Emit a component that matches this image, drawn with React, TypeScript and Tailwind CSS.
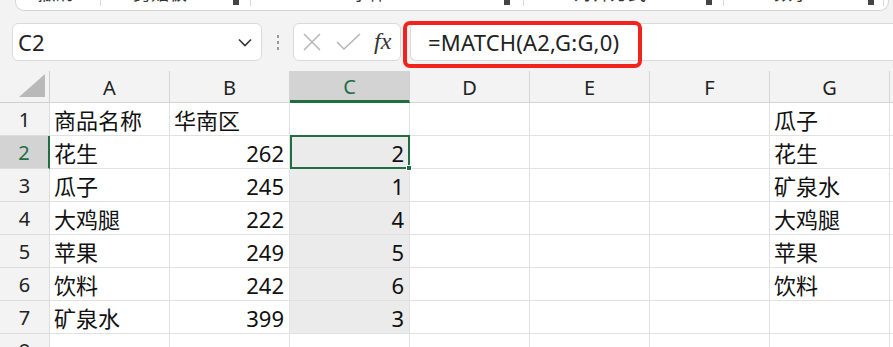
import React from "react";

const FONT = { fontFamily: '"Noto Sans", "Noto Sans CJK SC", sans-serif' };

const colA = ["商品名称", "花生", "瓜子", "大鸡腿", "苹果", "饮料", "矿泉水", ""];
const colB = ["华南区", "262", "245", "222", "249", "242", "399", ""];
const colC = ["", "2", "1", "4", "5", "6", "3", ""];
const colG = ["瓜子", "花生", "矿泉水", "大鸡腿", "苹果", "饮料", "", ""];
const letters = ["A", "B", "C", "D", "E", "F", "G"];

function Launcher() {
  return (
    <div className="w-[6px] h-[5px] bg-[#444] mt-0" />
  );
}

function Ribbon() {
  return (
    <div className="h-[11px] pl-[15px] pr-[4px]">
      <div className="h-[11px] bg-white border-b border-l border-r border-[#d6d6d6] rounded-b-[9px] flex overflow-hidden text-[18px] text-[#333] leading-[24px]">
        <div className="w-[85px] border-r border-[#d9d9d9] h-[6px] flex justify-center">
          <span className="-mt-[19px] ml-[-5px]">撤消</span>
        </div>
        <div className="w-[150px] h-[6px] border-r border-[#d9d9d9] flex items-start">
          <span className="-mt-[19px] ml-[32px]">剪贴板</span>
          <div className="ml-[46px]"><Launcher /></div>
        </div>
        <div className="w-[273px] h-[6px] border-r border-[#d9d9d9] flex items-start">
          <span className="-mt-[19px] ml-[100px]">字体</span>
          <div className="ml-[117px]"><Launcher /></div>
        </div>
        <div className="w-[200px] h-[6px] border-r border-[#d9d9d9] flex items-start">
          <span className="-mt-[19px] ml-[50px]">对齐方式</span>
          <div className="ml-[60px]"><Launcher /></div>
        </div>
        <div className="w-[160px] h-[6px] border-r border-[#d9d9d9] flex items-start">
          <span className="-mt-[19px] ml-[50px]">数字</span>
          <div className="ml-[58px]"><Launcher /></div>
        </div>
      </div>
    </div>
  );
}

function FormulaBar() {
  return (
    <div className="relative mt-[12px] h-[38px] flex items-stretch">
      <div className="ml-[12px] w-[250px] bg-white border border-[#dadada] rounded-[6px] flex items-center pl-[5px] pr-[9px]">
        <span className="text-[22px] text-[#222] leading-none">C2</span>
        <div className="flex-1" />
        <svg width="14" height="9" viewBox="0 0 14 9">
          <path d="M1 1.5 L7 7.5 L13 1.5" fill="none" stroke="#333" strokeWidth="1.6" />
        </svg>
      </div>
      <div className="w-[31px] flex flex-col items-center justify-center gap-[3px]">
        <div className="w-[2px] h-[3px] bg-[#999]" />
        <div className="w-[2px] h-[3px] bg-[#999]" />
        <div className="w-[2px] h-[3px] bg-[#999]" />
      </div>
      <div className="w-[108px] bg-white border border-[#dadada] rounded-[6px] flex items-center pl-[8px]">
        <svg width="20" height="20" viewBox="0 0 20 20">
          <path d="M2 2 L18 18 M18 2 L2 18" stroke="#b5b5b5" strokeWidth="1.5" fill="none" />
        </svg>
        <svg width="26" height="20" viewBox="0 0 26 20" className="ml-[14px]">
          <path d="M1 10 L8 17 L24 2" stroke="#b5b5b5" strokeWidth="1.5" fill="none" />
        </svg>
        <span
          className="ml-[12px] text-[24px] italic text-[#333] leading-none -mt-[3px]"
          style={{ fontFamily: '"Liberation Serif", "DejaVu Serif", serif' }}
        >
          fx
        </span>
      </div>
      <div className="ml-[9px] flex-1 bg-white border-t border-b border-l border-[#dadada] rounded-l-[6px] flex items-center pl-[17px]">
        <span className="text-[22px] text-[#222] leading-none tracking-[0.2px]">=MATCH(A2,G:G,0)</span>
      </div>
      <div className="absolute left-[403px] top-[-2px] w-[239px] h-[47px] border-[4px] border-[#f0241d] rounded-[7px]" />
    </div>
  );
}

function Grid() {
  return (
    <div className="mt-[10px]">
      {/* header */}
      <div className="flex h-[32px]">
        <div className="w-[50px] border-r border-b border-[#cfcfcf] flex items-end justify-end pr-[4px] pb-[5px]">
          <svg width="26" height="23" viewBox="0 0 26 23">
            <path d="M26 0 L26 23 L0 23 Z" fill="#b9b9b9" />
          </svg>
        </div>
        {letters.map((l) => {
          const sel = l === "C";
          return (
            <div
              key={l}
              className={
                sel
                  ? "w-[120px] bg-[#d3d3d3] border-r border-[#cfcfcf] border-b-[3px] border-b-[#1e6e42] flex items-center justify-center text-[20px] text-[#1e6e42] pt-[2px]"
                  : "w-[120px] border-r border-b border-[#d4d4d4] flex items-center justify-center text-[20px] text-[#222] pt-[2px]"
              }
            >
              {l}
            </div>
          );
        })}
        <div className="flex-1 border-b border-[#d4d4d4]" />
      </div>
      {colA.map((a, i) => {
        const row = i + 1;
        const rowSel = row === 2;
        const inSel = row >= 2 && row <= 7;
        return (
          <div key={row} className="flex h-[33px]">
            <div
              className={
                rowSel
                  ? "w-[50px] bg-[#d3d3d3] border-r-[2px] border-r-[#1e6e42] border-b border-b-[#dcdcdc] flex items-center justify-center text-[20px] text-[#1e6e42] pt-[2px]"
                  : "w-[50px] border-r border-b border-[#dcdcdc] flex items-center justify-center text-[20px] text-[#222] pt-[2px]"
              }
            >
              {row}
            </div>
            <div className="w-[120px] bg-white border-r border-b border-[#e1e1e1] flex items-center pl-[4px] pt-[2px] text-[22px] text-[#111] whitespace-nowrap">
              {a}
            </div>
            <div
              className={
                "w-[120px] bg-white border-r border-b border-[#e1e1e1] flex items-center pt-[2px] text-[22px] text-[#111] whitespace-nowrap " +
                (row === 1 ? "pl-[4px]" : "justify-end pr-[5px]")
              }
            >
              {colB[i]}
            </div>
            <div
              className={
                row === 2
                  ? "relative w-[120px] bg-[#ebebeb] border-[2px] border-[#1e6e42] -mt-[1px] h-[34px] flex items-center justify-end pr-[4px] pt-[2px] text-[22px] text-[#111]"
                  : inSel
                  ? "w-[120px] bg-[#ebebeb] border-r border-b border-[#e1e1e1] flex items-center justify-end pr-[5px] pt-[2px] text-[22px] text-[#111]"
                  : "w-[120px] bg-white border-r border-b border-[#e1e1e1] flex items-center justify-end pr-[5px] pt-[2px] text-[22px] text-[#111]"
              }
            >
              {colC[i]}
              {row === 2 && (
                <div className="absolute right-[-4px] bottom-[-4px] w-[6px] h-[6px] bg-[#1e6e42] border border-white" />
              )}
            </div>
            <div className="w-[120px] bg-white border-r border-b border-[#e1e1e1]" />
            <div className="w-[120px] bg-white border-r border-b border-[#e1e1e1]" />
            <div className="w-[120px] bg-white border-r border-b border-[#e1e1e1]" />
            <div className="w-[120px] bg-white border-r border-b border-[#e1e1e1] flex items-center pl-[4px] pt-[2px] text-[22px] text-[#111] whitespace-nowrap">
              {colG[i]}
            </div>
            <div className="flex-1 bg-white border-b border-[#e1e1e1]" />
          </div>
        );
      })}
    </div>
  );
}

export default function App() {
  return (
    <div className="w-[893px] h-[347px] overflow-hidden bg-[#f3f3f3]" style={FONT}>
      <Ribbon />
      <FormulaBar />
      <Grid />
    </div>
  );
}
